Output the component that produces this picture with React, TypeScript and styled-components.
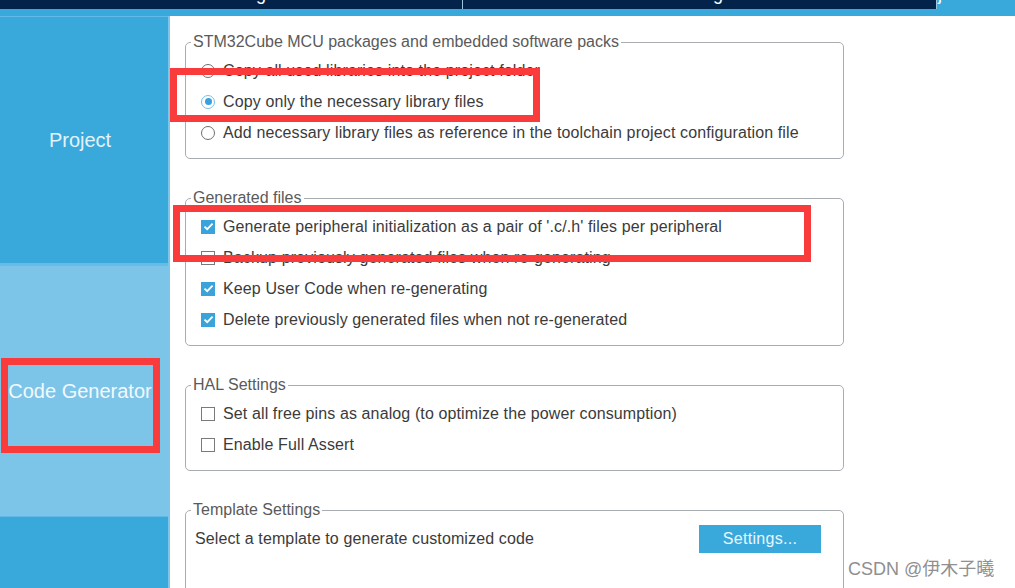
import React from "react";
import styled, { createGlobalStyle } from "styled-components";

const Global = createGlobalStyle`
  html, body { margin: 0; padding: 0; background: #ffffff; }
  body { font-family: "Liberation Sans", Arial, sans-serif; }
  * { box-sizing: border-box; }
`;

const Page = styled.div`
  position: relative;
  width: 1015px;
  height: 588px;
  overflow: hidden;
  display: flex;
  flex-direction: column;
  background: #ffffff;
`;

const TopTabs = styled.div`
  display: flex;
  height: 9px;
  flex: none;
`;

const Tab = styled.div<{ $width?: number; $active?: boolean }>`
  width: ${(p) => (p.$width ? `${p.$width}px` : "auto")};
  flex: ${(p) => (p.$width ? "none" : "1")};
  background: ${(p) => (p.$active ? "#39a9dc" : "#03234b")};
  border-right: ${(p) => (p.$active ? "none" : "1px solid #9cc4df")};
  overflow: hidden;
  display: flex;
  justify-content: center;
  align-items: flex-start;
`;

const TabLabel = styled.span`
  color: #ffffff;
  font-size: 18px;
  line-height: 18px;
  margin-top: -15px;
  white-space: nowrap;
`;

const Strip = styled.div`
  height: 7px;
  flex: none;
  background: #39a9dc;
`;

const Main = styled.div`
  flex: 1;
  display: flex;
  min-height: 0;
`;

const Sidebar = styled.nav`
  width: 170px;
  flex: none;
  display: flex;
  flex-direction: column;
  border-right: 2px solid #7cc6ea;
  background: #39a9dc;
`;

const NavItem = styled.div<{ $active?: boolean; $height: number }>`
  height: ${(p) => p.$height}px;
  flex: none;
  display: flex;
  align-items: center;
  justify-content: center;
  padding-right: 8px;
  background: ${(p) => (p.$active ? "#7dc5e8" : "#39a9dc")};
  border-top: ${(p) => (p.$active ? "3px solid #66bce6" : "1px solid #62bbe6")};
  color: ${(p) => (p.$active ? "#f2f9fd" : "#e4f2fa")};
  font-size: 20px;
  white-space: nowrap;
`;

const Content = styled.main`
  flex: 1;
  display: flex;
  flex-direction: column;
  gap: 30px;
  padding: 16px 0 0 15px;
  border-top: 1px solid #ffffff;
`;

const Group = styled.fieldset<{ $open?: boolean }>`
  flex: none;
  width: 659px;
  margin: 0;
  padding: 4px 0 10px 0;
  min-inline-size: 0;
  border: 1px solid #a9adb2;
  border-radius: 5px;
  min-height: ${(p) => (p.$open ? "140px" : "0")};
`;

const Legend = styled.legend`
  margin-left: 5px;
  padding: 0 2px;
  font-size: 16px;
  line-height: 18px;
  color: #5a5a5a;
`;

const Row = styled.div`
  display: flex;
  align-items: center;
  gap: 8px;
  height: 31px;
  padding-left: 15px;
  font-size: 16px;
  letter-spacing: 0.12px;
  color: #3b3b3b;
  white-space: nowrap;
`;

const TemplateRow = styled.div`
  display: flex;
  align-items: center;
  justify-content: space-between;
  height: 31px;
  padding: 0 22px 0 9px;
  font-size: 16px;
  letter-spacing: 0.12px;
  color: #3b3b3b;
`;

const Radio = styled.span<{ $checked?: boolean }>`
  width: 14px;
  height: 14px;
  border-radius: 50%;
  flex: none;
  border: 1px solid ${(p) => (p.$checked ? "#74c1ea" : "#6f6f6f")};
  background: #ffffff;
  display: flex;
  align-items: center;
  justify-content: center;
  &::after {
    content: "";
    width: 7px;
    height: 7px;
    border-radius: 50%;
    background: ${(p) => (p.$checked ? "#3a9fda" : "transparent")};
  }
`;

const Box = styled.span<{ $checked?: boolean }>`
  width: 14px;
  height: 14px;
  flex: none;
  border: 1px solid ${(p) => (p.$checked ? "#3aa3dc" : "#7a7a7a")};
  background: ${(p) => (p.$checked ? "#3aa3dc" : "#ffffff")};
  display: flex;
  align-items: center;
  justify-content: center;
`;

const SettingsButton = styled.button`
  width: 122px;
  height: 28px;
  border: none;
  background: #39a9dc;
  color: #eaf6fc;
  font-family: inherit;
  font-size: 16px;
  letter-spacing: 0.3px;
  padding: 0;
`;

const Annotation = styled.div<{ $l: number; $t: number; $w: number; $h: number }>`
  position: absolute;
  left: ${(p) => p.$l}px;
  top: ${(p) => p.$t}px;
  width: ${(p) => p.$w}px;
  height: ${(p) => p.$h}px;
  border: 7px solid #f93b3c;
  pointer-events: none;
`;

const Watermark = styled.div`
  position: absolute;
  left: 848px;
  top: 558px;
  font-family: "Liberation Sans", "Noto Sans CJK SC", sans-serif;
  font-size: 18px;
  line-height: 22px;
  color: #8f8f8f;
  white-space: nowrap;
`;

const Check: React.FC<{ checked?: boolean }> = ({ checked }) => (
  <Box $checked={checked}>
    {checked && (
      <svg width="11" height="9" viewBox="0 0 11 9">
        <path d="M1.5 4.6 L4.2 7.2 L9.6 1.6" fill="none" stroke="#ffffff" strokeWidth="1.8" />
      </svg>
    )}
  </Box>
);

export default function App() {
  return (
    <Page>
      <Global />
      <TopTabs>
        <Tab $width={463}>
          <TabLabel>Pinout &amp; Configuration</TabLabel>
        </Tab>
        <Tab $width={474}>
          <TabLabel>Clock Configuration</TabLabel>
        </Tab>
        <Tab $active>
          <TabLabel>Project Manager</TabLabel>
        </Tab>
      </TopTabs>
      <Strip />
      <Main>
        <Sidebar>
          <NavItem $height={247}>Project</NavItem>
          <NavItem $active $height={253}>Code Generator</NavItem>
          <NavItem $height={250}>Advanced Settings</NavItem>
        </Sidebar>
        <Content>
          <Group>
            <Legend>STM32Cube MCU packages and embedded software packs</Legend>
            <Row>
              <Radio />
              Copy all used libraries into the project folder
            </Row>
            <Row>
              <Radio $checked />
              Copy only the necessary library files
            </Row>
            <Row>
              <Radio />
              Add necessary library files as reference in the toolchain project configuration file
            </Row>
          </Group>
          <Group>
            <Legend>Generated files</Legend>
            <Row>
              <Check checked />
              Generate peripheral initialization as a pair of '.c/.h' files per peripheral
            </Row>
            <Row>
              <Check />
              Backup previously generated files when re-generating
            </Row>
            <Row>
              <Check checked />
              Keep User Code when re-generating
            </Row>
            <Row>
              <Check checked />
              Delete previously generated files when not re-generated
            </Row>
          </Group>
          <Group>
            <Legend>HAL Settings</Legend>
            <Row>
              <Check />
              Set all free pins as analog (to optimize the power consumption)
            </Row>
            <Row>
              <Check />
              Enable Full Assert
            </Row>
          </Group>
          <Group $open>
            <Legend>Template Settings</Legend>
            <TemplateRow>
              <span>Select a template to generate customized code</span>
              <SettingsButton>Settings...</SettingsButton>
            </TemplateRow>
          </Group>
        </Content>
      </Main>
      <Annotation $l={170} $t={68} $w={370} $h={54} />
      <Annotation $l={173} $t={205} $w={638} $h={57} />
      <Annotation $l={1} $t={358} $w={159} $h={95} />
      <Watermark>CSDN @伊木子曦</Watermark>
    </Page>
  );
}
